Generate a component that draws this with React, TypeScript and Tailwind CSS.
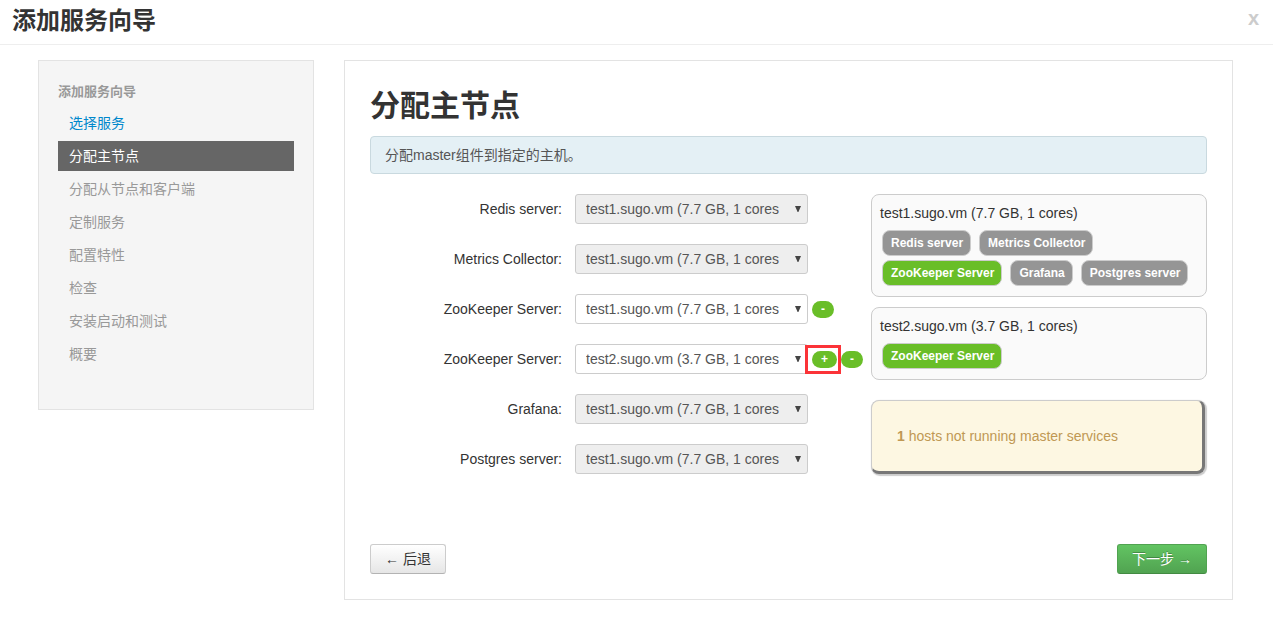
import { useState } from "react";

const steps = [
  "选择服务",
  "分配主节点",
  "分配从节点和客户端",
  "定制服务",
  "配置特性",
  "检查",
  "安装启动和测试",
  "概要",
];

const hostOptions = [
  { value: "test1", label: "test1.sugo.vm (7.7 GB, 1 cores" },
  { value: "test2", label: "test2.sugo.vm (3.7 GB, 1 cores" },
];

type Assignment = {
  id: string;
  label: string;
  host: string;
  locked: boolean;
  add?: boolean;
  remove?: boolean;
};

const initialAssignments: Assignment[] = [
  { id: "redis", label: "Redis server:", host: "test1", locked: true },
  { id: "metrics", label: "Metrics Collector:", host: "test1", locked: true },
  { id: "zk1", label: "ZooKeeper Server:", host: "test1", locked: false, remove: true },
  { id: "zk2", label: "ZooKeeper Server:", host: "test2", locked: false, add: true, remove: true },
  { id: "grafana", label: "Grafana:", host: "test1", locked: true },
  { id: "postgres", label: "Postgres server:", host: "test1", locked: true },
];

const hosts = [
  {
    name: "test1.sugo.vm (7.7 GB, 1 cores)",
    tags: ["Redis server", "Metrics Collector", "ZooKeeper Server", "Grafana", "Postgres server"],
  },
  { name: "test2.sugo.vm (3.7 GB, 1 cores)", tags: ["ZooKeeper Server"] },
];

function RoundButton({ label, children }: { label: string; children: string }) {
  return (
    <button
      type="button"
      aria-label={label}
      className="flex h-[17px] items-center rounded-full bg-[#69be28] px-[9px] text-xs leading-none font-bold text-white"
    >
      {children}
    </button>
  );
}

function AssignmentRow({ item, onChange }: { item: Assignment; onChange: (host: string) => void }) {
  return (
    <div className="flex items-center">
      <label htmlFor={item.id} className="w-48 shrink-0 text-right text-[#333]">
        {item.label}
      </label>
      <div className="relative ml-[13px] w-[233px] shrink-0">
        <select
          id={item.id}
          value={item.host}
          disabled={item.locked}
          onChange={(e) => onChange(e.target.value)}
          className="block h-[30px] w-full appearance-none rounded-[3px] border border-[#ccc] bg-white pl-2.5 text-sm text-[#555] opacity-100 disabled:bg-[#eee]"
        >
          {hostOptions.map((o) => (
            <option key={o.value} value={o.value}>
              {o.label}
            </option>
          ))}
        </select>
        <svg
          aria-hidden="true"
          viewBox="0 0 6 6"
          className="pointer-events-none absolute top-3 right-[7px] size-1.5"
        >
          <path d="M0 0h6L3.4 6h-.8z" fill="#444" />
        </svg>
      </div>
      <div className="ml-1 flex gap-1">
        {item.add && (
          <div className="relative">
            <RoundButton label="添加">+</RoundButton>
            <span className="pointer-events-none absolute -inset-y-1.5 -right-1 -left-[7px] border-3 border-[#fb3338]" />
          </div>
        )}
        {item.remove && <RoundButton label="移除">-</RoundButton>}
      </div>
    </div>
  );
}

export default function App() {
  const [assignments, setAssignments] = useState(initialAssignments);

  const setHost = (id: string, host: string) =>
    setAssignments((rows) => rows.map((r) => (r.id === id ? { ...r, host } : r)));

  return (
    <div className="min-h-screen bg-white font-['Liberation_Sans','Noto_Sans_CJK_SC',sans-serif] text-sm leading-5 text-[#333]">
      <header className="flex items-start justify-between border-b border-[#eee] pt-1.5 pr-3.5 pb-2 pl-3">
        <h2 className="text-2xl leading-[30px] font-bold">添加服务向导</h2>
        <button type="button" aria-label="关闭" className="text-xl leading-6 font-bold text-[#ccc]">
          x
        </button>
      </header>

      <div className="flex items-start gap-[30px] pt-[15px] pr-10 pb-8 pl-[38px]">
        <nav className="w-[276px] shrink-0 border border-[#e3e3e3] bg-[#f5f5f5] px-[19px] pt-5 pb-10">
          <div className="pt-px pb-1.5 text-[13px] leading-5 font-bold text-[#999]">添加服务向导</div>
          <ul className="flex flex-col gap-[3px]">
            {steps.map((step, i) => (
              <li key={step}>
                {i === 0 ? (
                  <a href="#services" className="block px-[11px] py-[5px] text-[#0088cc]">
                    {step}
                  </a>
                ) : i === 1 ? (
                  <a href="#masters" aria-current="step" className="block bg-[#666] px-[11px] py-[5px] text-white">
                    {step}
                  </a>
                ) : (
                  <span className="block px-[11px] py-[5px] text-[#999]">{step}</span>
                )}
              </li>
            ))}
          </ul>
        </nav>

        <main className="min-w-0 flex-1 border border-[#e3e3e3] p-[25px]">
          <h1 className="mb-2.5 text-3xl leading-10 font-bold">分配主节点</h1>
          <p className="mb-5 rounded border border-[#c9d9df] bg-[#e4f0f5] px-3.5 py-2 text-[#555]">
            分配master组件到指定的主机。
          </p>

          <div className="flex items-start justify-between">
            <form className="flex flex-col gap-5">
              {assignments.map((item) => (
                <AssignmentRow key={item.id} item={item} onChange={(h) => setHost(item.id, h)} />
              ))}
            </form>

            <aside className="w-[336px] shrink-0">
              {hosts.map((host) => (
                <section
                  key={host.name}
                  className="mb-2.5 rounded-lg border border-[#ccc] bg-[#fafafa] px-2 pt-2 pb-2.5"
                >
                  <h3>{host.name}</h3>
                  <ul className="mt-[7px] ml-0.5 flex flex-wrap gap-x-2 gap-y-1">
                    {host.tags.map((tag) => (
                      <li
                        key={tag}
                        className={
                          "rounded-lg border border-[#ccc] py-0.5 pr-[7px] pl-2 text-xs leading-5 font-bold text-white " +
                          (tag === "ZooKeeper Server" ? "bg-[#69be28]" : "bg-[#959595]")
                        }
                      >
                        {tag}
                      </li>
                    ))}
                  </ul>
                </section>
              ))}
              <p className="mt-5 mr-0.5 rounded-lg border border-r-3 border-b-3 border-[#ccc] border-r-[#777] border-b-[#777] bg-[#fdf7e2] px-[25px] py-[25px] text-[#c09853] shadow-[1px_1px_1px_1px_#ccc]">
                <strong>1</strong> hosts not running master services
              </p>
            </aside>
          </div>

          <div className="mt-[70px] flex justify-between">
            <button
              type="button"
              className="h-[30px] rounded-[3px] border border-[#ccc] border-b-[#b3b3b3] bg-linear-to-b from-white to-[#e6e6e6] px-3.5 text-[#333]"
            >
              ← 后退
            </button>
            <button
              type="button"
              className="h-[30px] rounded-[3px] border border-[#51a351] border-b-[#428a42] bg-linear-to-b from-[#62c462] to-[#51a351] px-3.5 text-white text-shadow-[0_-1px_0_rgba(0,0,0,0.25)]"
            >
              下一步 →
            </button>
          </div>
        </main>
      </div>
    </div>
  );
}
